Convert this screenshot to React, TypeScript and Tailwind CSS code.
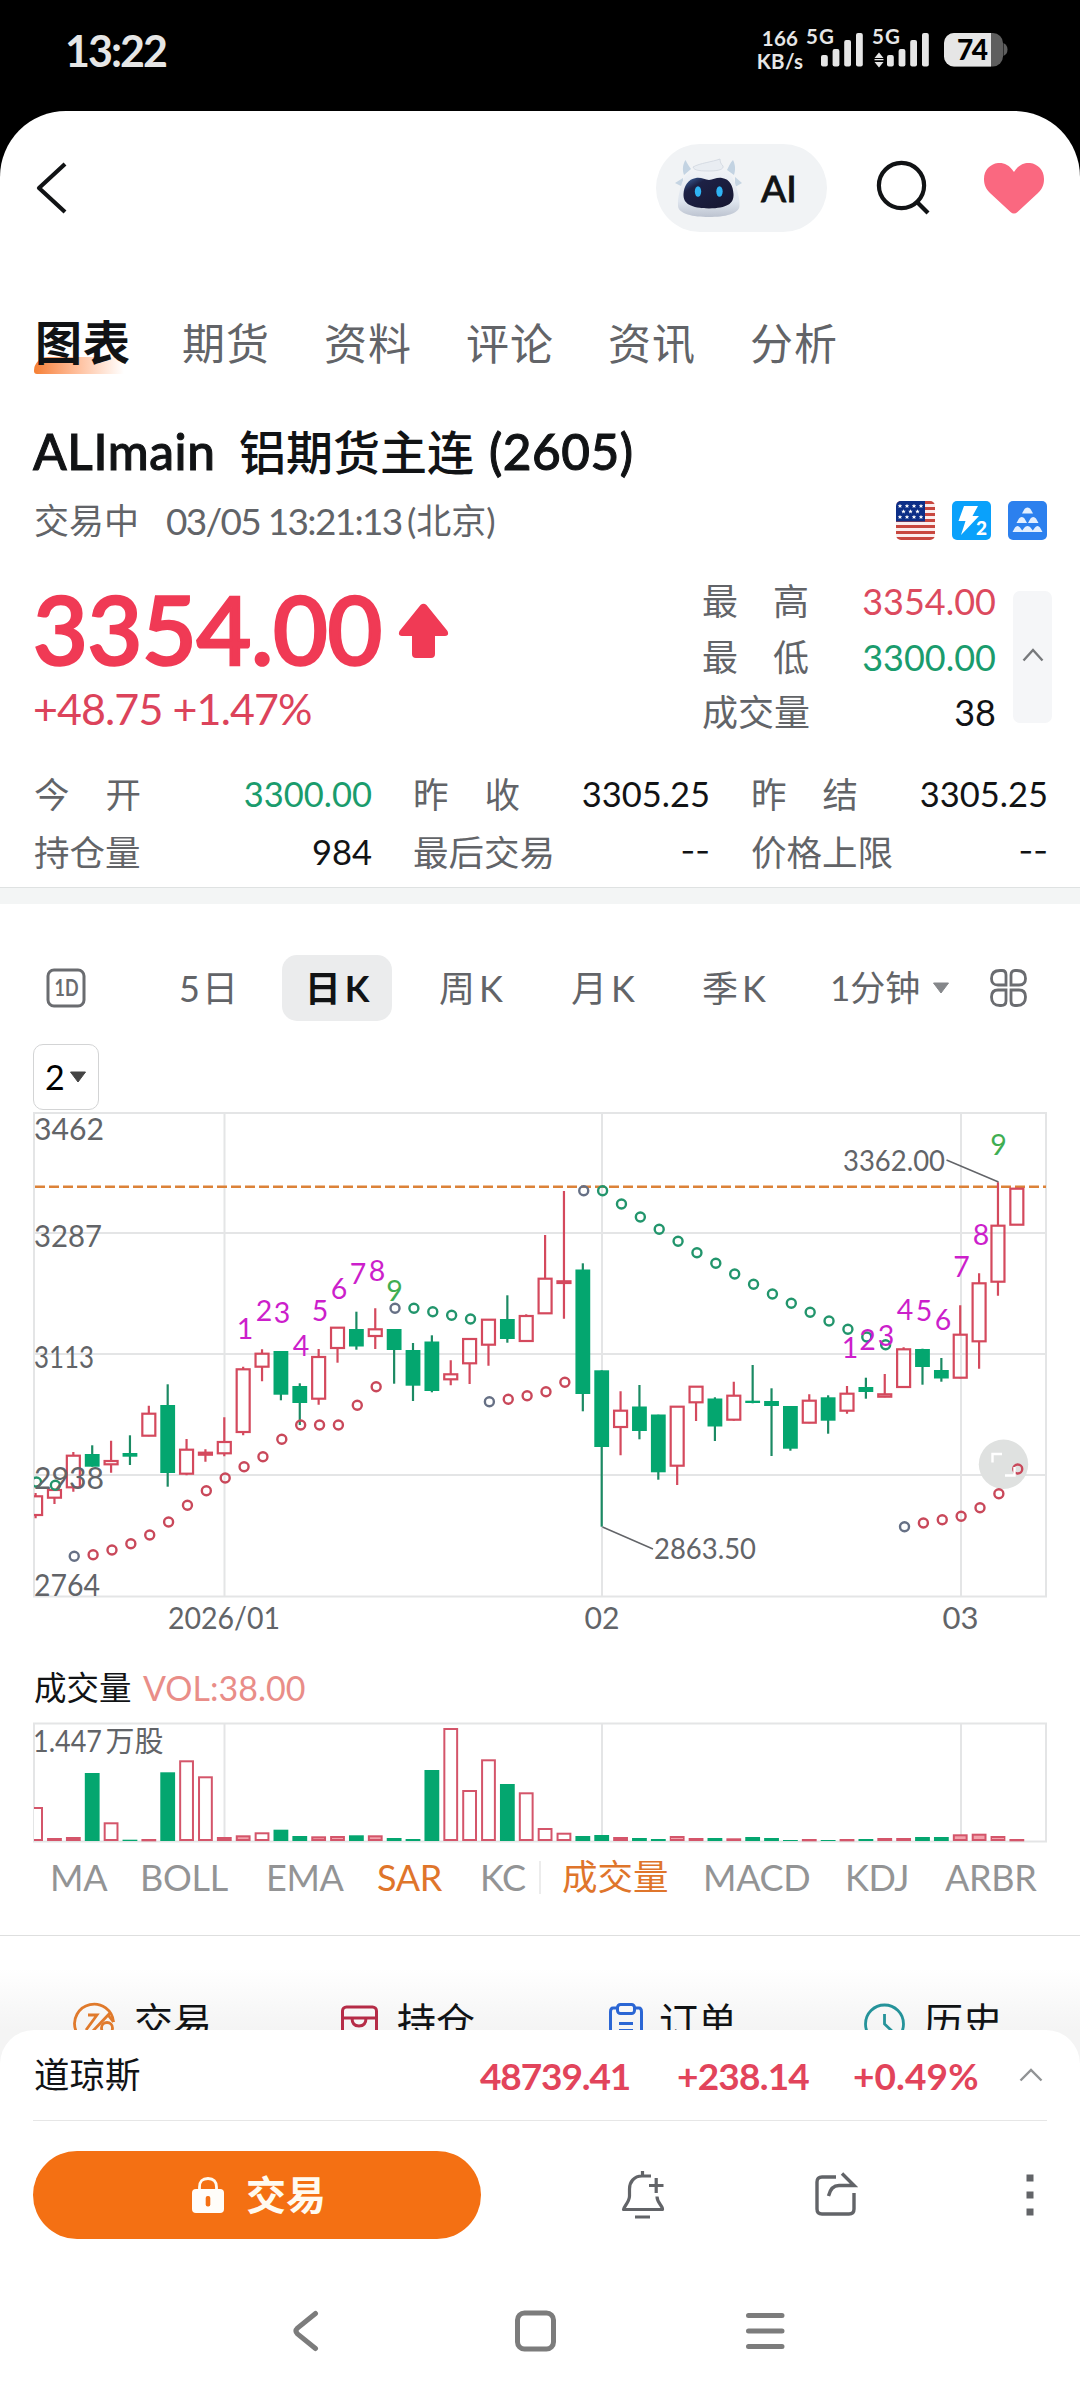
import React from 'react';

const PITCH = 18.87;
const FIRST_X = 35.6;
const cx = (i: number) => FIRST_X + PITCH * i;

const UP = '#d4495d';
const DOWN = '#04a66f';
const MUTED = '#626468';
const GRID = '#e4e5e6';
const MONTHS = [224.5, 602, 961];

type Candle = ['u' | 'd', number, number, number, number];

// direction, high, body top, body bottom, low
const candles: Candle[] = [
  ['u', 381, 384.3, 403, 406.3], ['u', 377.3, 378, 385.7, 392], ['u', 340, 343.7, 375.3, 379.7],
  ['d', 333.3, 342, 354.7, 354.7], ['u', 328.7, 349, 352.3, 360.7], ['d', 323.3, 341, 344.7, 353],
  ['u', 293.7, 301.7, 323.7, 324.3], ['d', 272.3, 293, 361, 374.7], ['u', 327, 337.7, 361.7, 363.3],
  ['u', 337.3, 340.7, 342.7, 349.7], ['u', 305.3, 330, 341.3, 344.3], ['u', 254.7, 257.3, 320, 323.3],
  ['u', 237.3, 241.7, 254.7, 269.3], ['d', 239, 239, 282.7, 288.3], ['d', 271.3, 274, 291, 313],
  ['u', 237, 245, 286.7, 292.7], ['u', 215.7, 215.7, 236, 250.7], ['d', 199.7, 217, 234.5, 237.7],
  ['u', 196.3, 217.3, 224, 237], ['d', 217.3, 217, 238, 271.7], ['d', 231, 238, 273.7, 289],
  ['d', 223.3, 229.5, 279, 280.3], ['u', 248.3, 262.3, 267.3, 273.3], ['u', 226.7, 227, 251.3, 272],
  ['u', 207, 207.7, 232.7, 253.7], ['d', 183.3, 207, 227, 230.7], ['u', 202.3, 204, 229, 229],
  ['u', 123, 166.7, 201.3, 201.3], ['u', 79, 169.3, 171, 206.7], ['d', 151.3, 157.5, 282, 299.3],
  ['d', 258.3, 258.3, 335, 414.7], ['u', 279.3, 298.7, 315, 343.3], ['d', 273, 294.5, 319, 327.3],
  ['d', 302.7, 302.5, 360.3, 367.7], ['u', 294, 294.7, 353.7, 373], ['u', 274.7, 274.7, 290.3, 309],
  ['d', 285.3, 286.5, 314.5, 329], ['u', 269.7, 283.7, 307.7, 308.7], ['d', 253, 288.7, 291, 291.3],
  ['d', 276.3, 289, 294, 344], ['d', 294.3, 294, 336.7, 338.7], ['u', 282.3, 288.7, 310.7, 311.3],
  ['d', 283.3, 285.3, 308.7, 321.7], ['u', 274, 281.7, 298.7, 301.7], ['d', 265.7, 275, 280, 286.7],
  ['u', 262, 282.3, 284.7, 285.3], ['u', 235.3, 237.3, 275, 275.7], ['d', 236.7, 237, 255, 272.7],
  ['d', 246, 258, 266.5, 269.7], ['u', 193.3, 222.7, 265.7, 266.3], ['u', 161.3, 171.3, 229.3, 256.7],
  ['u', 70.3, 113.7, 169.7, 183.7], ['u', 76.7, 76.7, 112.7, 112.7],
];

// SAR runs: g = falling, r = rising; the first dot after a flip is slate
const sarRuns: { start: number; tone: 'g' | 'r'; flip: boolean; ys: number[] }[] = [
  { start: 0, tone: 'g', flip: false, ys: [370, 373.3] },
  { start: 2, tone: 'r', flip: true, ys: [444.3, 442.7, 438, 431.7, 423, 410, 393.3, 378.7, 366, 354.7, 344.7, 327.3, 313, 313, 313, 293.3, 274.7] },
  { start: 19, tone: 'g', flip: true, ys: [196.3, 196.3, 199.7, 203.3, 207] },
  { start: 24, tone: 'r', flip: true, ys: [289.7, 287.3, 283.7, 279.7, 270.3] },
  { start: 29, tone: 'g', flip: true, ys: [78.7, 78.7, 92, 105, 117.3, 129.3, 140.7, 151.3, 162, 172.3, 182, 191.3, 200.3, 209, 217.3, 225, 232.7] },
  { start: 46, tone: 'r', flip: true, ys: [414.7, 411, 407.7, 404.3, 395.7, 381.7, 357] },
];

const counts: [string, number, number][] = [
  ['1', 245, 227], ['2', 264, 209.3], ['3', 282, 211.3], ['4', 301, 243.7], ['5', 320, 209],
  ['6', 339, 187], ['7', 358, 171.7], ['8', 377, 169], ['9', 394.6, 188.7],
  ['1', 850, 245.7], ['2', 867.5, 237.7], ['3', 886, 234.3], ['4', 905, 207.7], ['5', 924, 209],
  ['6', 943, 217.7], ['7', 961.5, 164.7], ['8', 981, 132.7], ['9', 998.5, 43],
];

const volumes = [
  34, 3, 4, 68, 18.7, 1.3, 2, 68.7, 80.7, 64.7, 4, 5.7, 8.7, 11.3, 5, 4.7, 5, 5.7, 5.7, 3, 2, 71, 113, 51,
  81.7, 57, 48.7, 13, 8.3, 5, 6, 4, 3, 2, 5, 3, 3, 2.7, 4, 3, 1, 2, 1, 2, 2, 3, 3, 4, 4, 6.7, 7.3, 5, 2,
];

const AxisText: React.FC<{ x: number; y: number; w: number; size?: number; children: string }> = ({ x, y, w, size = 31, children }) => (
  <text x={x} y={y} fontSize={size} textLength={w} lengthAdjust="spacingAndGlyphs" fill={MUTED}>{children}</text>
);

const PriceChart: React.FC = () => (
  <svg width="1080" height="528" viewBox="0 0 1080 528" className="block overflow-visible">
    <defs>
      <clipPath id="plot"><rect x="34" y="0" width="1013" height="486" /></clipPath>
    </defs>
    <g stroke={GRID} strokeWidth="2" fill="none">
      <rect x="34" y="1" width="1012" height="483.5" />
      {[121, 242, 363].map((y) => <path key={y} d={`M34 ${y}H1046`} />)}
      {MONTHS.map((x) => <path key={x} d={`M${x} 1V484`} />)}
    </g>
    <path d="M35 74.8H1046" stroke="#dc8238" strokeWidth="2.4" strokeDasharray="10 4" />
    <circle cx="1003.5" cy="352.3" r="24.7" fill="#dfe1e0" />

    <g clipPath="url(#plot)">
      {candles.map(([dir, high, top, bottom, low], i) =>
        dir === 'd' ? (
          <g key={i}>
            <path d={`M${cx(i)} ${high}V${low}`} stroke="#1b8a63" strokeWidth="2.2" />
            <rect x={cx(i) - 7.4} y={top} width="14.8" height={bottom - top} fill={DOWN} />
          </g>
        ) : (
          <g key={i} stroke={UP} strokeWidth="2.2" fill="none">
            <path d={`M${cx(i)} ${high}V${top}M${cx(i)} ${bottom}V${low}`} />
            <rect x={cx(i) - 6.5} y={top} width="13" height={bottom - top} />
          </g>
        )
      )}
      {sarRuns.map((run) =>
        run.ys.map((y, k) => (
          <circle
            key={`${run.start}-${k}`}
            cx={cx(run.start + k) + 0.9}
            cy={y}
            r="4.5"
            fill="none"
            strokeWidth="2.4"
            stroke={run.flip && k === 0 ? '#667085' : run.tone === 'g' ? '#22956c' : '#c9485a'}
          />
        ))
      )}
    </g>
    <path d="M992.5 350.5V342H1002M1005 363.5H1014.5V355" fill="none" stroke="#fff" strokeWidth="2.4" />

    <g fontSize="28.5" textAnchor="middle">
      {counts.map(([n, x, y]) => (
        <text key={x} x={x} y={y} fill={n === '9' ? '#3fae52' : '#cc1fcb'}>{n}</text>
      ))}
    </g>

    <path d="M946.5 48L998.5 70M602.5 415L653 437" stroke="#626468" strokeWidth="1.4" />
    <AxisText x={843} y={58.7} w={102} size={28.5}>3362.00</AxisText>
    <AxisText x={654} y={447} w={102} size={28.5}>2863.50</AxisText>

    <AxisText x={34} y={28} w={70}>3462</AxisText>
    <AxisText x={34} y={135} w={68}>3287</AxisText>
    <AxisText x={34} y={256} w={60}>3113</AxisText>
    <AxisText x={34} y={377} w={70}>2938</AxisText>
    <AxisText x={34} y={484} w={66}>2764</AxisText>
    <AxisText x={168} y={516.5} w={112}>2026/01</AxisText>
    <AxisText x={584.5} y={516.5} w={35}>02</AxisText>
    <AxisText x={942.5} y={516.5} w={36}>03</AxisText>
  </svg>
);

const VolumeChart: React.FC = () => (
  <svg width="1080" height="122" viewBox="0 0 1080 122" className="block">
    <defs>
      <clipPath id="vol"><rect x="34" y="0" width="1013" height="122" /></clipPath>
    </defs>
    <g stroke={GRID} strokeWidth="2" fill="none">
      <rect x="34" y="1.5" width="1012" height="118" />
      {MONTHS.map((x) => <path key={x} d={`M${x} 1.5V119`} />)}
    </g>
    <AxisText x={33} y={29.5} w={69}>1.447</AxisText>
    <AxisText x={105.5} y={29.5} w={58} size={29}>万股</AxisText>
    <g clipPath="url(#vol)">
      {volumes.map((h, i) => {
        const hollow = candles[i][0] === 'u';
        const inset = hollow ? 1 : 0;
        return (
          <rect
            key={i}
            x={cx(i) - 7.4 + inset}
            y={119 - h + inset}
            width={14.8 - inset * 2}
            height={Math.max(h - inset * 2, 0.3)}
            fill={hollow ? (h > 8 ? '#fff' : '#f2a3ac') : DOWN}
            stroke={hollow ? '#d4556a' : 'none'}
            strokeWidth="2"
          />
        );
      })}
    </g>
  </svg>
);

const RobotIcon: React.FC = () => (
  <svg width="70" height="62" viewBox="0 0 70 62">
    <defs>
      <linearGradient id="shell" x1="0" y1="0" x2="0" y2="1">
        <stop offset="0" stopColor="#f3f5f8" />
        <stop offset=".7" stopColor="#dfe5ee" />
        <stop offset="1" stopColor="#bcc3d0" />
      </linearGradient>
      <linearGradient id="visor" x1="0" y1="0" x2="1" y2="1">
        <stop offset="0" stopColor="#3f6aa8" />
        <stop offset=".25" stopColor="#1d2145" />
        <stop offset="1" stopColor="#16162f" />
      </linearGradient>
    </defs>
    <path d="M10 18C8 12 9 7 11.5 3C13.500 7 15 9 17 12ZM60 18C62 12 61 7 59 3C56 6 55 9 53 13Z" fill="#c3d3e2" />
    <path d="M1 26L9 21V30ZM68 26L61 20V30Z" fill="#c6d5e3" />
    <path d="M35 8C50 8 59 17 62 29C64 36 66 43 65.500 49C65 57 51 60 35 60C19 60 4.500 57 4 49C3.500 43 5 36 7 29C10 17 20 8 35 8Z" fill="url(#shell)" />
    <path d="M19 10C26 6 38 5 46 2C46 5 47 7 49 9C50 12 45 14 36 14C28 14 20 14 19 10Z" fill="#e9edf2" stroke="#cfd5de" strokeWidth=".8" />
    <path d="M22 21C27 20 31 23 35 23C39 23 43 20 48 21C56 22 59 29 59.500 37C60 47 53 51 35 51.500C17 51 9 47 9.500 37C10 29 14 22 22 21Z" fill="url(#visor)" />
    <ellipse cx="24" cy="34.500" rx="3.200" ry="5.200" fill="#2fb4f4" />
    <ellipse cx="45.500" cy="34.500" rx="3.200" ry="5.200" fill="#2fb4f4" />
  </svg>
);

const Signal: React.FC<{ arrows?: boolean }> = ({ arrows }) => (
  <svg width="60" height="42" viewBox="0 0 60 42" fill="#e6e6e6" className="overflow-visible">
    <text x="0" y="18" fontSize="20.5" fontWeight="700" textLength="28">5G</text>
    {arrows && <path d="M2.500 32L7 26.500L11.500 32ZM2.500 36L7 41.500L11.500 36ZM2.500 33H11.500V34.200H2.500Z" />}
    <rect x="15" y="29" width="6.800" height="11.500" rx="2" />
    <rect x="26.600" y="23" width="6.800" height="17.500" rx="2" />
    <rect x="38.200" y="14" width="6.800" height="26.500" rx="2" />
    <rect x="50" y="7" width="6.800" height="33.500" rx="2" />
  </svg>
);

const StatusBar: React.FC = () => (
  <div className="flex h-[111px] items-start bg-black pt-[26px] text-[#e6e6e6]">
    <div className="ml-[65px] mt-[3px] w-[690px] text-[43px] leading-none font-bold tracking-[-2px]">13:22</div>
    <div className="flex w-[50px] flex-col items-center pt-px text-[20.5px] leading-[23px] font-bold tracking-[.3px]">
      <span>166</span>
      <span>KB/s</span>
    </div>
    <div className="ml-[1px] w-[66px]"><Signal /></div>
    <div className="w-[72px]"><Signal arrows /></div>
    <svg width="64" height="42" viewBox="0 0 64 42">
      <clipPath id="batt"><rect x="0" y="7" width="59" height="33.500" rx="10" /></clipPath>
      <g clipPath="url(#batt)">
        <rect x="0" y="7" width="59" height="34" fill="#5e5e5e" />
        <rect x="0" y="7" width="47" height="34" fill="#e6e6e6" />
      </g>
      <path d="M59.500 17Q63.500 19 63.500 23.500Q63.500 28 59.500 30Z" fill="#5e5e5e" />
      <text x="13" y="34" fontSize="28" fontWeight="900" textLength="31" fill="#000">74</text>
    </svg>
  </div>
);

const Header: React.FC = () => (
  <div className="bg-black">
    <div className="flex h-[154px] items-center rounded-t-[66px] bg-white pl-[34px]">
      <svg width="36" height="54" viewBox="0 0 36 54" fill="none" stroke="#111315" strokeWidth="4.200">
        <path d="M31 3L5 27L31 51" strokeLinejoin="round" />
      </svg>
      <div className="ml-[586px] flex h-[88px] w-[171px] items-center rounded-full bg-[#f1f3f5] pl-[18px]">
        <RobotIcon />
        <span className="ml-[17px] -mt-[2px] text-[37px] leading-none font-medium text-[#111315] [-webkit-text-stroke:0.8px]">AI</span>
      </div>
      <svg width="56" height="56" viewBox="0 0 56 56" className="ml-[49px]" fill="none" stroke="#111315" strokeWidth="4.200">
        <circle cx="25.500" cy="25.500" r="22.600" />
        <path d="M41 42L52 53" />
      </svg>
      <svg width="62" height="52" viewBox="0 0 62 52" className="ml-[51px]">
        <path d="M31 10C26 2 20 .500 15 1C7 2 1 8 1 17C1 23 3 27 7 31L27.500 50Q31 53 34.500 50L55 31C59 27 61 23 61 17C61 8 55 2 47 1C42 .500 36 2 31 10Z" fill="#fa6880" />
      </svg>
    </div>
  </div>
);

const tabs = ['期货', '资料', '评论', '资讯', '分析'];

const NavTabs: React.FC = () => (
  <div className="flex h-[160px] items-center pb-[3px] pl-[35px] text-[43px] leading-none tracking-[1px] text-[#626468]">
    <div className="relative -mt-[2px] w-[147px]">
      <div className="absolute top-[38px] -left-px h-[17px] w-[90px] rounded-tl-[14px] rounded-bl-[3px] bg-gradient-to-r from-[#f57f31] to-white" />
      <span className="relative text-[47px] font-bold text-[#111315]">图表</span>
    </div>
    {tabs.map((t) => <div key={t} className="w-[142px]">{t}</div>)}
  </div>
);

const Badges: React.FC = () => (
  <div className="ml-auto flex gap-[17px] pr-[33px]">
    <svg width="39" height="39" viewBox="0 0 39 39">
      <clipPath id="flag"><rect width="39" height="39" rx="5" /></clipPath>
      <g clipPath="url(#flag)">
        <rect width="39" height="39" fill="#fbeeee" />
        {[0, 1, 2, 3, 4, 5, 6].map((n) => <rect key={n} y={n * 6} width="39" height="3" fill="#c8473f" />)}
        <rect width="29" height="20.500" fill="#0d2f87" />
        {[[4, 5], [11, 5], [18, 5], [25, 5], [7.500, 10.500], [14.500, 10.500], [21.500, 10.500], [4, 16], [11, 16], [18, 16], [25, 16]].map(([x, y]) => (
          <path key={`${x}-${y}`} transform={`translate(${x} ${y})`} d="M0-2.200L.6-.7L2.200-.7L1 .4L1.500 2L0 1L-1.500 2L-1 .4L-2.200-.7L-.6-.7Z" fill="#fff" />
        ))}
      </g>
    </svg>
    <svg width="39" height="39" viewBox="0 0 39 39">
      <rect width="39" height="39" rx="5" fill="#0aa1fb" />
      <path d="M12 5H26L20.500 15H27L9 34L13.500 20H6.500Z" fill="#fff" />
      <text x="24" y="34" fontSize="19" fontWeight="900" fill="#fff" stroke="#0aa1fb" strokeWidth="3" paintOrder="stroke">2</text>
    </svg>
    <svg width="39" height="39" viewBox="0 0 39 39" fill="#e3efff">
      <rect width="39" height="39" rx="5" fill="#2c80ee" />
      <path d="M14 12.500L16.500 8Q17.500 6.500 19.500 6.500T22.500 8L25 12.500Z" />
      <path d="M8.500 22L11 17.500Q12 16 13.800 16T16.500 17.500L19 22ZM20 22L22.500 17.500Q23.500 16 25.200 16T28 17.500L30.500 22Z" />
      <path d="M4.500 31L7 26.500Q8 25 9.500 25T12 26.500L14.200 29.500L16.500 26.500Q17.500 25 19.500 25T22.500 26.500L24.800 29.500L27 26.500Q28 25 29.500 25T32 26.500L34.500 31Z" />
    </svg>
  </div>
);

const SpacedLabel: React.FC<{ text: string }> = ({ text }) => (
  <span className="flex w-[107px] justify-between text-[#626468]">
    {text.split('').map((c) => <span key={c}>{c}</span>)}
  </span>
);

const cell = 'flex h-[58px] items-center justify-between text-[#111315]';
const stats: [string, string, string][] = [
  ['今开', '3300.00', 'flex h-[58px] items-center justify-between text-[#1a9c6d]'],
  ['昨收', '3305.25', cell],
  ['昨结', '3305.25', cell],
  ['持仓量', '984', cell],
  ['最后交易', '--', cell],
  ['价格上限', '--', cell],
];

const Quote: React.FC = () => (
  <>
    <div className="flex h-[54px] items-center pl-[33px] text-[#111315]">
      <span className="w-[206px] text-[49.5px] leading-none font-medium tracking-[.6px] [-webkit-text-stroke:1px]">ALImain</span>
      <span className="w-[250px] text-[47px] leading-none font-medium">铝期货主连</span>
      <span className="text-[49.5px] leading-none font-medium tracking-[.5px] [-webkit-text-stroke:1px]">(2605)</span>
    </div>
    <div className="flex h-[82px] items-center pl-[34px] text-[35px] leading-none text-[#626468]">
      <span className="w-[132px]">交易中</span>
      <span className="w-[241px] text-[37px] tracking-[-1.7px]">03/05 13:21:13</span>
      <span>(北京)</span>
      <Badges />
    </div>
    <div className="flex h-[180px] pt-3 pl-[33px]">
      <div className="w-[669px]">
        <div className="flex h-[116px] items-center text-[#f03a55]">
          <span className="-mt-1 w-[365px] text-[94.5px] leading-none font-medium tracking-[-.3px] [-webkit-text-stroke:2.6px]">3354.00</span>
          <svg width="51" height="56" viewBox="0 0 51 56" fill="currentColor">
            <path d="M22.500 2Q25.500-.500 28.500 2L49.500 28Q51.500 33 47 33H37V51Q37 55 33 55H18Q14 55 14 51V33H4Q-.500 33 1.500 28Z" />
          </svg>
        </div>
        <div className="flex h-[42px] items-center pb-[3px] text-[43px] leading-none tracking-[-.9px] text-[#dc435b]">+48.75 +1.47%</div>
      </div>
      <div className="w-[294px] text-[36px] leading-none">
        <div className="flex h-14 items-center justify-between pb-px"><SpacedLabel text="最高" /><span className="text-[#dc4a5e]">3354.00</span></div>
        <div className="flex h-14 items-center justify-between pb-px"><SpacedLabel text="最低" /><span className="text-[#1a9c6d]">3300.00</span></div>
        <div className="flex h-14 items-center justify-between pb-[2px]"><SpacedLabel text="成交量" /><span className="text-[#111315]">38</span></div>
      </div>
      <div className="mt-[18px] ml-[17px] flex h-[132px] w-[39px] items-center justify-center rounded-[7px] bg-[#f5f6f8]">
        <svg width="22" height="14" viewBox="0 0 22 14" className="-mt-1" fill="none" stroke="#77797c" strokeWidth="2.400"><path d="M1.500 12.500L11 2L20.500 12.500" /></svg>
      </div>
    </div>
    <div className="mt-[25px] grid grid-cols-[338px_297px_297px] gap-x-[41px] pb-[5px] pl-[34px] text-[35.5px] leading-none">
      {stats.map(([label, value, tone]) => (
        <div key={label} className={tone}>
          {label.length === 2 ? <SpacedLabel text={label} /> : <span className="text-[#626468]">{label}</span>}
          {value === '--'
            ? <span className="pb-1 font-[Inter,sans-serif] text-[32px]">--</span>
            : <span className="pb-[2px] text-[34.5px]">{value}</span>}
        </div>
      ))}
    </div>
  </>
);

const PeriodBar: React.FC = () => (
  <div className="mt-7 flex h-[112px] items-center pb-px pl-[46px] text-[36px] leading-none text-[#626468]">
    <svg width="40" height="40" viewBox="0 0 40 40" className="mr-[93px]">
      <rect x="2" y="2" width="36" height="36" rx="6" fill="none" stroke="#6a6c70" strokeWidth="3" />
      <text x="8.500" y="28" fontSize="22" fontWeight="700" textLength="24" lengthAdjust="spacingAndGlyphs" fill="#6a6c70">1D</text>
    </svg>
    <div className="w-[103px]">5<span className="ml-[2px]">日</span></div>
    <div className="flex h-[66px] w-[110px] items-center justify-center rounded-[15px] bg-[#ebeced] font-bold text-[#111315]">日<span className="ml-1">K</span></div>
    <div className="ml-[47px] w-[132px]">周<span className="ml-1">K</span></div>
    <div className="w-[131px]">月<span className="ml-1">K</span></div>
    <div className="w-[128px]">季<span className="ml-1">K</span></div>
    <div className="w-[102px] text-[35px]">1分钟</div>
    <svg width="18" height="12" viewBox="0 0 18 12" fill="#85878a"><path d="M1.500 1H16.500L9 11Z" stroke="#85878a" strokeLinejoin="round" /></svg>
    <svg width="40" height="40" viewBox="0 0 40 40" className="ml-[39px]" fill="none" stroke="#6a6c70" strokeWidth="2.800">
      <path d="M11 2.500H13Q17 2.500 17 7V17H9Q2.500 17 2.500 10.500Q2.500 2.500 11 2.500Z" />
      <path d="M28 2.500Q36.500 2.500 36.500 10.500Q36.500 17 30 17H22V7Q22 2.500 26 2.500Z" />
      <path d="M9 22H17V33Q17 37.500 12 37.500H11Q2.500 37.500 2.500 29Q2.500 22 9 22Z" />
      <path d="M22 22H30Q36.500 22 36.500 29Q36.500 37.500 28 37.500H26Q22 37.500 22 33Z" />
    </svg>
  </div>
);

const IndicatorBar: React.FC = () => (
  <div className="flex h-[68px] items-center pb-[2px] pl-[50px] text-[36px] leading-none tracking-[-.3px] text-[#939495]">
    <span className="w-[90px]">MA</span>
    <span className="w-[126px]">BOLL</span>
    <span className="w-[111px]">EMA</span>
    <span className="w-[103px] text-[#df752b]">SAR</span>
    <span className="w-[59px]">KC</span>
    <span className="h-[33px] w-[2px] bg-[#ececec]" />
    <span className="ml-[21px] w-[141px] text-[35.5px] tracking-normal text-[#df752b]">成交量</span>
    <span className="w-[142px]">MACD</span>
    <span className="w-[100px]">KDJ</span>
    <span>ARBR</span>
  </div>
);

const ActionRow: React.FC = () => (
  <div className="flex h-[95px] items-start overflow-hidden border-t border-[#dedfdf] bg-gradient-to-b from-white from-35% to-[#f4f4f4] pt-[66px] text-[39px] leading-none text-[#111315]">
    <svg width="44" height="44" viewBox="0 0 44 44" className="ml-[72px]" fill="none" stroke="#e07a2c" strokeWidth="2.800">
      <path d="M31 39A19.500 19.500 0 1 1 41.500 20" />
      <path d="M16 13H25L14 28M38 11L19 31M41.500 20L36 13" />
      <circle cx="35" cy="26" r="5.500" />
    </svg>
    <span className="ml-[18px] w-[205px]">交易</span>
    <svg width="40" height="40" viewBox="0 0 40 40" className="mt-[2px]" fill="none" stroke="#b52c47" strokeWidth="3">
      <rect x="3.500" y="3" width="34" height="34" rx="4" />
      <path d="M3 14H38M13 14C13 20 16 22 20 22S27 20 27 14" />
    </svg>
    <span className="ml-[18px] w-[210px]">持仓</span>
    <svg width="36" height="42" viewBox="0 0 36 42" className="ml-px" fill="none" stroke="#2b66d4" strokeWidth="3">
      <path d="M9 6H5Q2.500 6 2.500 10V40H33.500V10Q33.500 6 31 6H27" />
      <rect x="9.500" y="2.500" width="17" height="9" rx="3" />
      <path d="M11 21.500H25M11 28.500H25" />
    </svg>
    <span className="ml-[15px] w-[205px]">订单</span>
    <svg width="42" height="42" viewBox="0 0 42 42" fill="none" stroke="#25939a" strokeWidth="2.800">
      <circle cx="20.500" cy="22" r="19" />
      <path d="M20.500 12V22L28 29" />
    </svg>
    <span className="ml-[18px]">历史</span>
  </div>
);

const BottomSheet: React.FC = () => (
  <div className="bg-[#f4f4f4]">
    <div className="h-[370px] rounded-t-[34px] bg-white px-[33px]">
      <div className="flex h-[91px] items-center border-b border-[#e6e6e6] text-[35.5px] leading-none text-[#111315]">
        <span className="w-[447px] pl-[1px]">道琼斯</span>
        <div className="flex text-[37px] font-bold text-[#e2445b]">
          <span className="w-[197px] tracking-[-1.1px]">48739.41</span>
          <span className="w-[176px] tracking-[-.8px]">+238.14</span>
          <span className="w-[166px] tracking-[.1px]">+0.49%</span>
        </div>
        <svg width="24" height="14" viewBox="0 0 24 14" fill="none" stroke="#919395" strokeWidth="2.400"><path d="M1.500 12.500L12 2L22.500 12.500" /></svg>
      </div>
      <div className="flex h-[148px] items-center text-[#626468]">
        <button className="flex h-[88px] w-[448px] items-center rounded-full bg-[#f47013] pl-[158px] text-[40px] leading-none font-bold text-[#fffaf0]">
          <svg width="34" height="38" viewBox="0 0 34 38" className="mr-[21px]">
            <path d="M8.500 14V11Q8.500 2.500 17 2.500T25.500 11V14" fill="none" stroke="currentColor" strokeWidth="2.800" />
            <path d="M5 13H29Q33 13 33 17V33Q33 37 29 37H5Q1 37 1 33V17Q1 13 5 13Z" fill="#fffdf9" />
            <rect x="14.700" y="20" width="4.600" height="10.500" rx="2" fill="#f47013" />
          </svg>
          交易
        </button>
        <svg width="44" height="50" viewBox="0 0 44 50" className="ml-[140px]" fill="none" stroke="currentColor" strokeWidth="3.200">
          <path d="M21.500 1V6M30 6H21C13 6 8.500 12 8.500 19V26C8.500 32 2.500 37 2.500 39.500H41.500C42 36 36 33 36 26.500" strokeLinejoin="round" />
          <path d="M28 15.500H42.500M35.200 8V23M14 47H29" />
        </svg>
        <svg width="44" height="48" viewBox="0 0 44 48" className="ml-[149px]" fill="none" stroke="currentColor" strokeWidth="3.400">
          <path d="M22 6H8Q3 6 3 11V38Q3 43 8 43H35Q40 43 40 38V22" />
          <path d="M28 2.500L40 14.500H25Q17 14.500 14.500 25" />
        </svg>
        <svg width="8" height="44" viewBox="0 0 8 44" className="ml-[168px]" fill="currentColor">
          <path d="M.500 1.500H7.500V8.500H.500ZM.500 18.500H7.500V25.500H.500ZM.500 35.500H7.500V42.500H.500Z" />
        </svg>
      </div>
      <div className="flex h-[124px] items-center text-[#7c7c7c]">
        <svg width="28" height="44" viewBox="0 0 28 44" className="ml-[258px]" fill="none" stroke="currentColor" strokeWidth="5" strokeLinecap="round">
          <path d="M24.500 4.500L6.500 19Q3.500 22 6.500 25L24.500 39.500" />
        </svg>
        <svg width="44" height="44" viewBox="0 0 44 44" className="ml-[194px]" fill="none" stroke="currentColor" strokeWidth="5">
          <rect x="4.500" y="4" width="36" height="36" rx="7" />
        </svg>
        <svg width="42" height="44" viewBox="0 0 42 44" className="ml-[187px]" stroke="currentColor" strokeWidth="5" strokeLinecap="round">
          <path d="M4.500 6.500H38M4.500 22H38M4.500 37.500H38" />
        </svg>
      </div>
    </div>
  </div>
);

const App: React.FC = () => {
  return (
    <div className="h-[2400px] w-[1080px] overflow-hidden bg-white font-[Lato,'Noto_Sans_CJK_SC',sans-serif] whitespace-nowrap">
      <StatusBar />
      <Header />
      <NavTabs />
      <Quote />

      <div className="h-[17px] border-t border-[#dfe2e2] bg-[#f3f5f5]" />

      {/* K-line chart */}
      <PeriodBar />
      <div className="ml-[33px] flex h-[66px] w-[66px] items-center gap-[5px] rounded-[10px] border border-[#d3d4d5] pb-px pl-[11px] text-[34px] leading-none">
        2
        <svg width="18" height="12" viewBox="0 0 18 12" fill="#444" className="-ml-px"><path d="M1.500 1H16.500L9 11Z" stroke="#444" strokeLinejoin="round" /></svg>
      </div>
      <div className="mt-[2px]"><PriceChart /></div>

      {/* Volume */}
      <div className="flex h-[82px] items-center pt-[14px] pl-[34px] text-[32.5px] leading-none text-[#111315]">
        <span className="w-[109px]">成交量</span>
        <span className="text-[34px] text-[#e98d88]">VOL:38.00</span>
      </div>
      <VolumeChart />
      <IndicatorBar />
      <div className="h-[23px]" />

      <ActionRow />
      <BottomSheet />
    </div>
  );
};

export default App;
